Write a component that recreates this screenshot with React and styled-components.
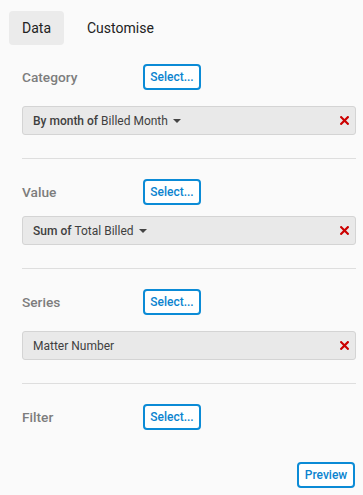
import React from "react";
import styled, { createGlobalStyle } from "styled-components";

const Global = createGlobalStyle`
  html, body { margin: 0; padding: 0; background: #fafafa; }
  body { font-family: Roboto, "Liberation Sans", Arial, sans-serif; }
  * { box-sizing: border-box; }
`;

const Page = styled.div`
  width: 363px;
  height: 495px;
  background: #fafafa;
  display: flex;
  flex-direction: column;
`;

const Tabs = styled.div`
  display: flex;
  padding: 11px 0 0 9px;
  gap: 10px;
`;

const Tab = styled.div`
  height: 34px;
  padding: 0 13px;
  display: flex;
  align-items: center;
  font-size: 14px;
  color: #222;
  border-radius: 4px;
  background: ${(p) => (p.$active ? "#ebebeb" : "transparent")};
`;

const Content = styled.div`
  padding: 19px 7px 0 22px;
  display: flex;
  flex-direction: column;
`;

const Section = styled.div`
  display: flex;
  flex-direction: column;
  padding-top: ${(p) => (p.$first ? 0 : 20)}px;
`;

const Row = styled.div`
  display: flex;
  align-items: center;
  height: 26px;
`;

const Label = styled.div`
  width: 121px;
  font-size: 13.7px;
  font-weight: 500;
  color: #7d7d7d;
`;

const OutlineButton = styled.button`
  height: 26px;
  width: ${(p) => p.$w}px;
  padding: 0;
  border: 2px solid #0b8bd6;
  border-radius: 4px;
  background: #fff;
  color: #0b84cf;
  font-family: inherit;
  font-size: 12px;
  font-weight: 500;
  display: flex;
  align-items: center;
  justify-content: center;
`;

const Field = styled.div`
  margin-top: ${(p) => p.$gap}px;
  height: 29px;
  border: 1px solid #d4d4d4;
  border-radius: 3px;
  background: #e9e9e9;
  display: flex;
  align-items: center;
  padding: 0 6px 0 10px;
  font-size: 12px;
  color: #3f3f3f;
`;

const FieldText = styled.span`
  flex: 1;
  display: flex;
  align-items: center;
  b { font-weight: 500; margin-right: 3px; }
`;

const Caret = styled.span`
  display: inline-block;
  margin-left: 5px;
  width: 0;
  height: 0;
  border-left: 4px solid transparent;
  border-right: 4px solid transparent;
  border-top: 4px solid #444;
`;

const Divider = styled.hr`
  margin: 23px 0 0 0;
  border: none;
  border-top: 1px solid #dedede;
  height: 0;
`;

const Footer = styled.div`
  display: flex;
  justify-content: flex-end;
  margin-top: 32px;
  padding-right: 1px;
`;

const Remove = () => (
  <svg width="9" height="9" viewBox="0 0 9 9">
    <path d="M1.2 1.2 L7.8 7.8 M7.8 1.2 L1.2 7.8" stroke="#cc0000" strokeWidth="2.2" strokeLinecap="square" />
  </svg>
);

function Chip({ gap, bold, text, caret }) {
  return (
    <Field $gap={gap}>
      <FieldText>
        {bold && <b>{bold}</b>}
        {text}
        {caret && <Caret />}
      </FieldText>
      <Remove />
    </Field>
  );
}

export default function App() {
  return (
    <Page>
      <Global />
      <Tabs>
        <Tab $active>Data</Tab>
        <Tab>Customise</Tab>
      </Tabs>
      <Content>
        <Section $first>
          <Row>
            <Label>Category</Label>
            <OutlineButton $w={58}>Select...</OutlineButton>
          </Row>
          <Chip gap={16} bold="By month of" text="Billed Month" caret />
          <Divider />
        </Section>
        <Section>
          <Row>
            <Label>Value</Label>
            <OutlineButton $w={58}>Select...</OutlineButton>
          </Row>
          <Chip gap={11} bold="Sum of" text="Total Billed" caret />
          <Divider />
        </Section>
        <Section>
          <Row>
            <Label>Series</Label>
            <OutlineButton $w={58}>Select...</OutlineButton>
          </Row>
          <Chip gap={16} text="Matter Number" />
          <Divider />
        </Section>
        <Section>
          <Row>
            <Label>Filter</Label>
            <OutlineButton $w={58}>Select...</OutlineButton>
          </Row>
        </Section>
        <Footer>
          <OutlineButton $w={58}>Preview</OutlineButton>
        </Footer>
      </Content>
    </Page>
  );
}
